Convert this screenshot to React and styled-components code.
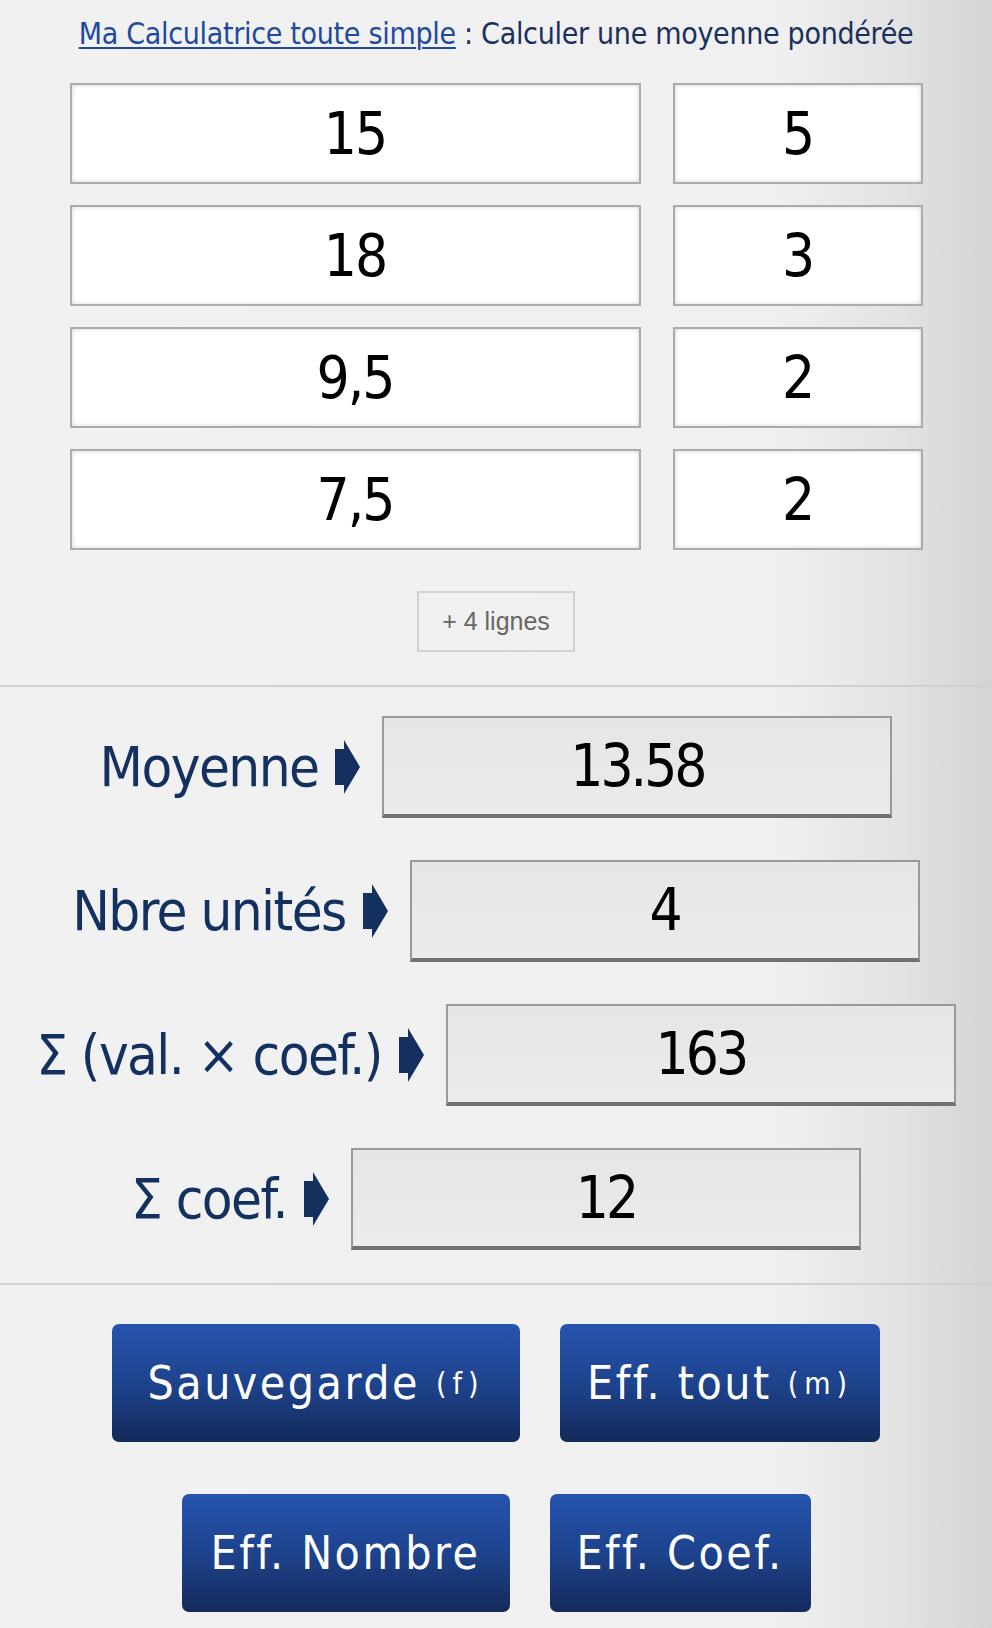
import React from "react";
import styled, { createGlobalStyle } from "styled-components";

const techno = `"Liberation Sans Narrow", "DejaVu Sans Condensed", "Liberation Sans", sans-serif`;

const GlobalStyle = createGlobalStyle`
  html, body {
    margin: 0;
    padding: 0;
  }
  body {
    min-height: 1628px;
    background: linear-gradient(90deg, #f1f1f1 0%, #f0f0f0 78%, #e2e2e2 91%, #d4d4d4 100%);
    font-family: ${techno};
    font-stretch: condensed;
  }
`;

const Page = styled.div`
  width: 992px;
  padding-top: 14px;
`;

const Title = styled.h1`
  margin: 0;
  text-align: center;
  font-size: 30px;
  line-height: 40px;
  font-weight: 400;
  letter-spacing: -0.3px;
  color: #1b2f5e;
  a {
    color: #1d4a9c;
    text-decoration: underline;
    text-decoration-thickness: 2px;
    text-underline-offset: 3px;
  }
`;

const Entries = styled.div`
  margin-top: 29px;
  display: flex;
  flex-direction: column;
  align-items: center;
  gap: 21px;
`;

const EntryRow = styled.div`
  display: flex;
  gap: 32px;
`;

const EntryBox = styled.input`
  box-sizing: border-box;
  width: ${(p) => p.$width}px;
  height: 101px;
  border: 2px solid #acacac;
  background: #fff;
  box-shadow: inset 0 0 4px rgba(0, 0, 0, 0.18);
  text-align: center;
  font-family: ${techno};
  font-stretch: condensed;
  font-size: 58px;
  letter-spacing: -2px;
  color: #000;
  padding: 0;
  outline: none;
`;

const MoreWrap = styled.div`
  display: flex;
  justify-content: center;
  margin-top: 41px;
`;

const MoreButton = styled.button`
  box-sizing: border-box;
  width: 158px;
  height: 61px;
  border: 2px solid #d2d2d2;
  background: transparent;
  color: #666;
  font-family: "Liberation Sans", Arial, sans-serif;
  font-size: 25px;
  padding: 0;
`;

const Divider = styled.hr`
  margin: ${(p) => p.$top}px 0 0;
  border: 0;
  height: 2px;
  background: #d0d0d0;
`;

const Results = styled.div`
  margin-top: 29px;
  display: flex;
  flex-direction: column;
  gap: 42px;
`;

const ResultRow = styled.div`
  display: flex;
  justify-content: center;
  align-items: center;
`;

const Label = styled.span`
  font-size: 56px;
  line-height: 1;
  color: #13305f;
  white-space: nowrap;
  letter-spacing: -1.6px;
`;

const Arrow = styled.svg`
  display: block;
  margin: 0 22px 0 17px;
  fill: #13305f;
`;

const ResultBox = styled.div`
  box-sizing: border-box;
  width: 510px;
  height: 102px;
  border: 2px solid #999;
  border-bottom: 4px solid #707070;
  background: linear-gradient(180deg, #e6e6e6, #ebebeb);
  display: flex;
  align-items: center;
  justify-content: center;
  font-size: 58px;
  letter-spacing: -3px;
  color: #000;
`;

const Actions = styled.div`
  margin-top: 39px;
  display: flex;
  flex-direction: column;
  gap: 52px;
`;

const ActionRow = styled.div`
  display: flex;
  justify-content: center;
  gap: 40px;
`;

const ActionButton = styled.button`
  box-sizing: border-box;
  height: 118px;
  width: ${(p) => p.$width}px;
  border: 0;
  border-radius: 7px;
  background: linear-gradient(180deg, #2554af 0%, #1e438d 50%, #132a5b 100%);
  color: #fff;
  font-family: ${techno};
  font-stretch: condensed;
  font-size: 46px;
  letter-spacing: 2.5px;
  padding: 0;
  display: flex;
  align-items: center;
  justify-content: center;
`;

const Shortcut = styled.span`
  font-size: 30px;
  letter-spacing: 6px;
  margin-left: 16px;
`;

const entries = [
  ["15", "5"],
  ["18", "3"],
  ["9,5", "2"],
  ["7,5", "2"],
];

const results = [
  ["Moyenne", "13.58"],
  ["Nbre unités", "4"],
  ["Σ (val. × coef.)", "163"],
  ["Σ coef.", "12"],
];

function ArrowIcon() {
  return (
    <Arrow width="25" height="54" viewBox="0 0 25 54">
      <polygon points="0,9 9,9 9,0 25,27 9,54 9,45 0,45" />
    </Arrow>
  );
}

export default function App() {
  return (
    <Page>
      <GlobalStyle />
      <Title>
        <a href="#">Ma Calculatrice toute simple</a> : Calculer une moyenne pondérée
      </Title>

      <Entries>
        {entries.map(([value, coef], i) => (
          <EntryRow key={i}>
            <EntryBox $width={571} defaultValue={value} />
            <EntryBox $width={250} defaultValue={coef} />
          </EntryRow>
        ))}
      </Entries>

      <MoreWrap>
        <MoreButton>+ 4 lignes</MoreButton>
      </MoreWrap>

      <Divider $top={33} />

      <Results>
        {results.map(([label, value]) => (
          <ResultRow key={label}>
            <Label>{label}</Label>
            <ArrowIcon />
            <ResultBox>{value}</ResultBox>
          </ResultRow>
        ))}
      </Results>

      <Divider $top={33} />

      <Actions>
        <ActionRow>
          <ActionButton $width={408}>
            Sauvegarde<Shortcut>(f)</Shortcut>
          </ActionButton>
          <ActionButton $width={320}>
            Eff. tout<Shortcut>(m)</Shortcut>
          </ActionButton>
        </ActionRow>
        <ActionRow>
          <ActionButton $width={328}>Eff. Nombre</ActionButton>
          <ActionButton $width={261}>Eff. Coef.</ActionButton>
        </ActionRow>
      </Actions>
    </Page>
  );
}
